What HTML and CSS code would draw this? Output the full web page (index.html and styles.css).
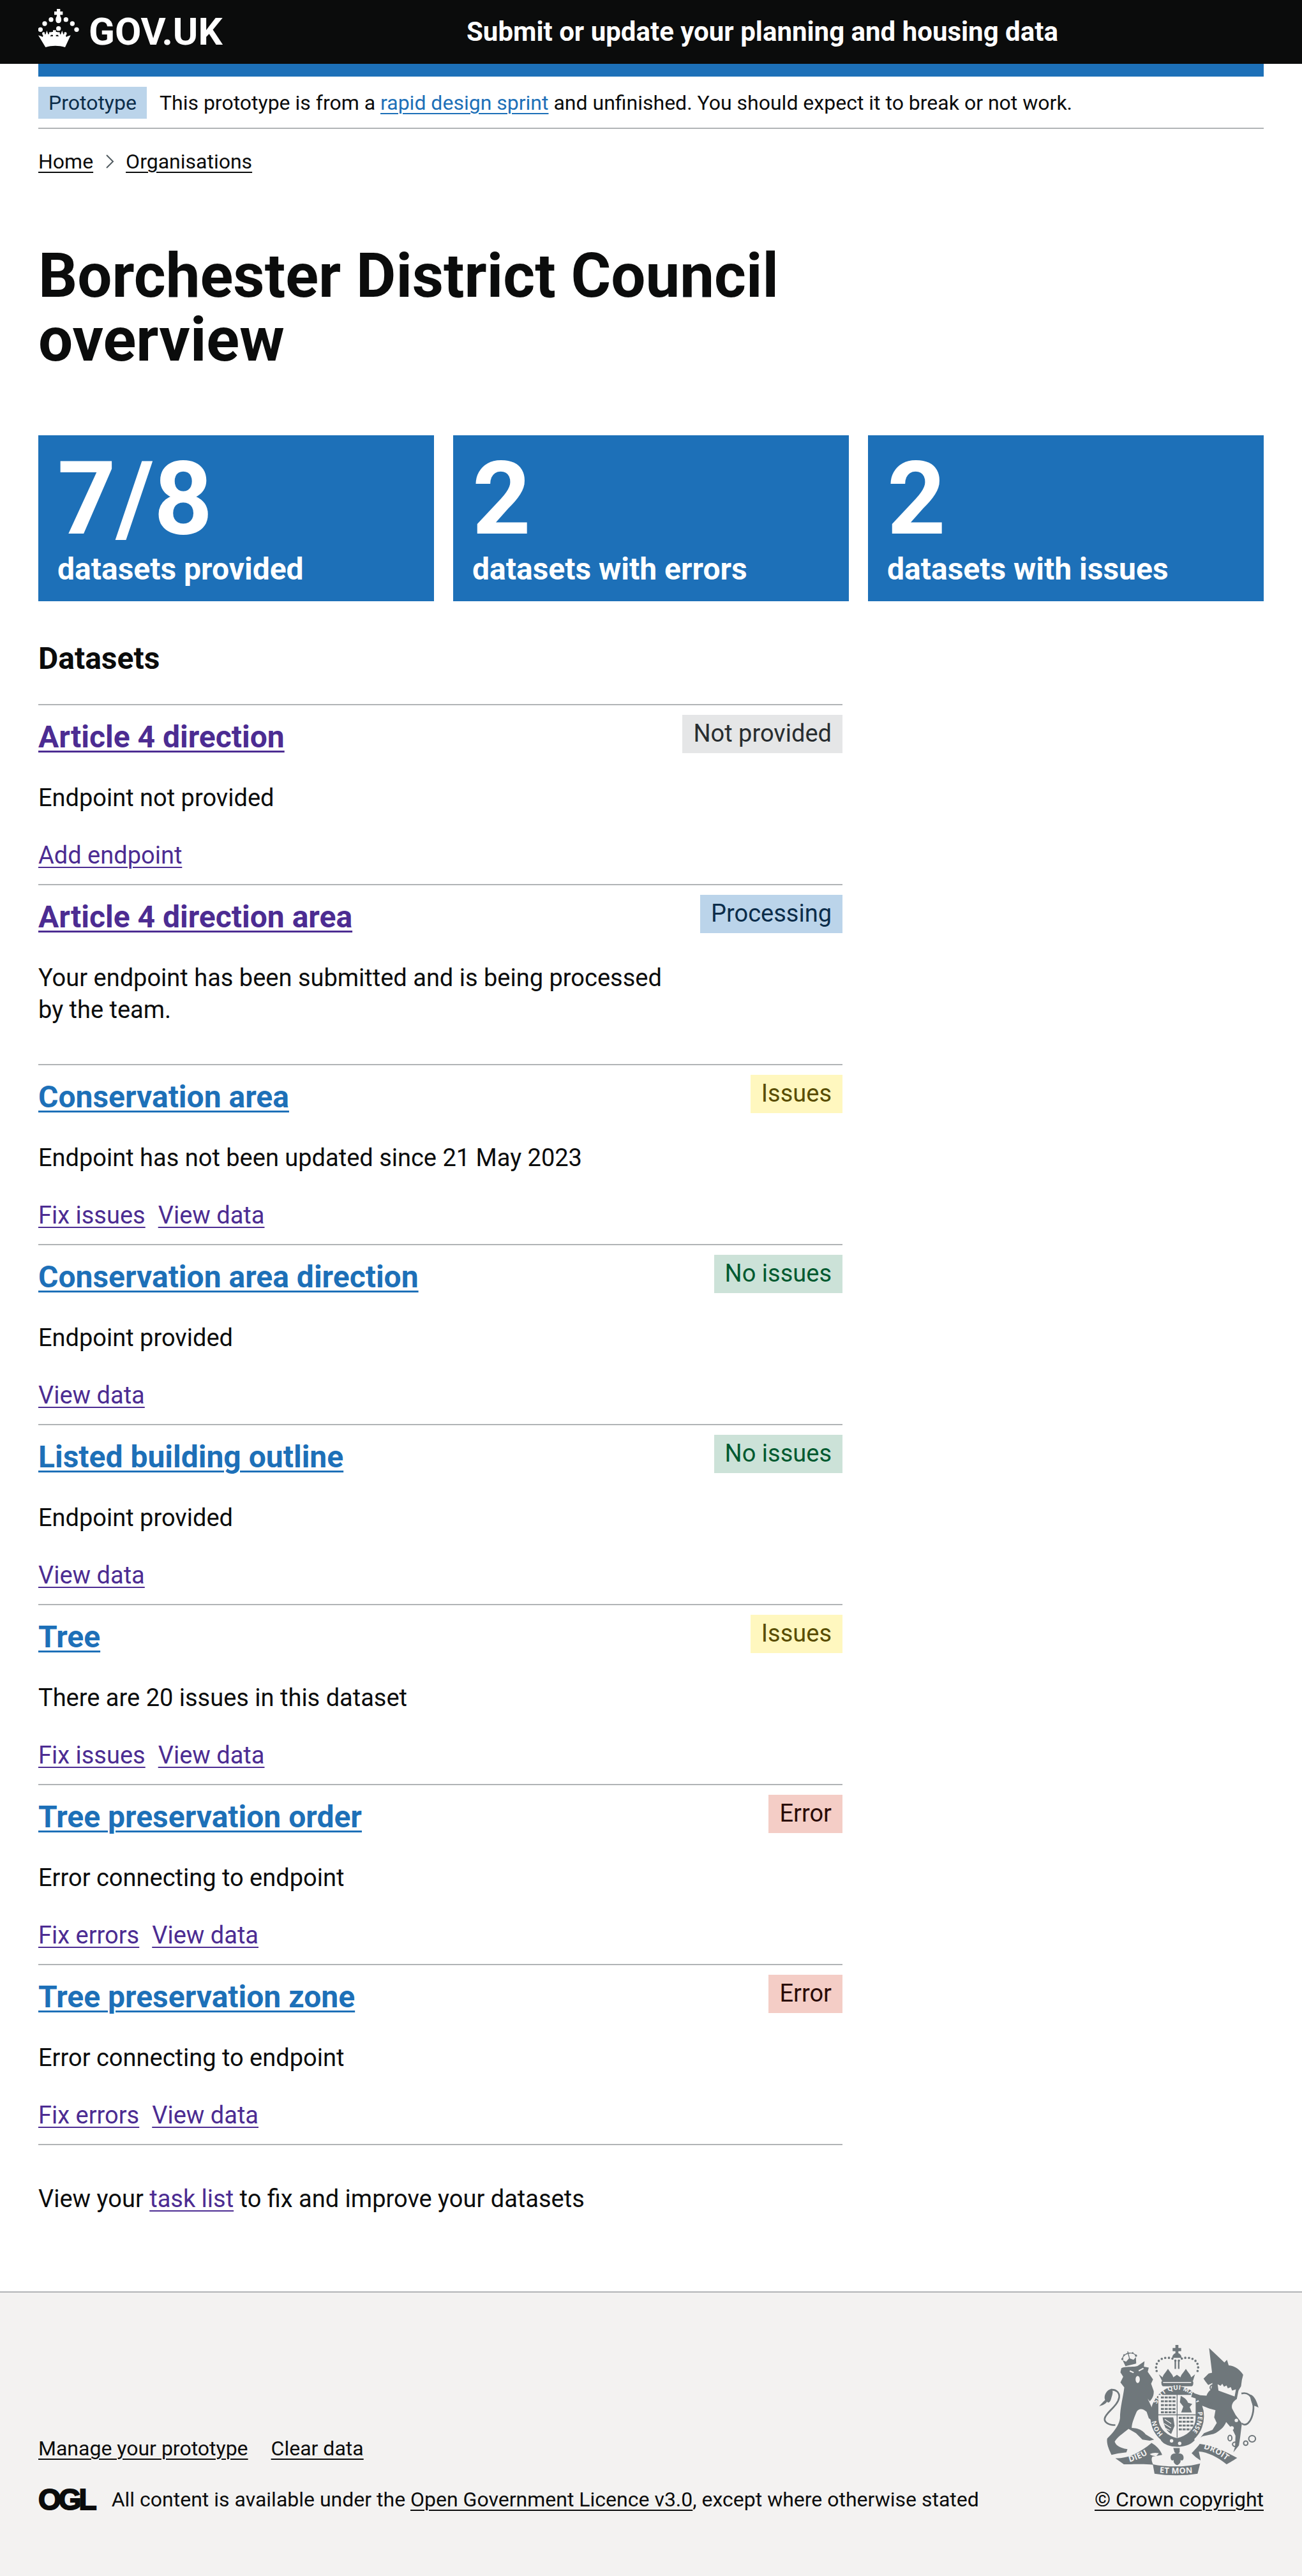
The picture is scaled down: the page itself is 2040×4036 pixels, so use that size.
FILE: index.html
```html
<!DOCTYPE html>
<html lang="en">
<head>
    <meta charset="UTF-8">
    <meta name="viewport" content="width=device-width, initial-scale=1.0">
    <title>Borchester District Council overview</title>
    <link rel="stylesheet" href="styles.css">
</head>
<body>
    <header class="site-header">
        <a class="logo" href="#">
            <svg class="logo-crown" viewBox="30 28 192 180" aria-hidden="true">
                <path d="M117 28h16v12h12v16h-12v6c8 10 8 33-8 33s-16-23-8-33v-6h-12V40h12z"/>
                <circle cx="90" cy="78" r="11"/><circle cx="160" cy="78" r="11"/>
                <circle cx="60" cy="97" r="11"/><circle cx="190" cy="97" r="11"/>
                <circle cx="40" cy="125" r="11"/><circle cx="210" cy="125" r="11"/>
                <circle cx="125" cy="120" r="11"/>
                <path d="M30 152l14 4 6 4 3-6-4-7c-3-8 4-13 12-8-2 4-1 7 3 9l6-18 7 18c4-2 5-5 3-9 8-5 15 0 11 9l-5 9 13-1v-6h-8v-14h8v-8h14v8h8v14h-8v6l13 1-5-9c-4-9 3-14 11-9-2 4-1 7 3 9l7-18 6 18c4-2 5-5 3-9 8-5 15 0 12 8l-4 7 3 6 6-4 14-4-26 56c-30-9-62-9-92 0z"/>
            </svg>
            <span class="logo-text">GOV.UK</span>
        </a>
        <a class="service-name" href="#">Submit or update your planning and housing data</a>
    </header>

    <div class="page">
        <div class="blue-bar"></div>

        <div class="phase-banner">
            <strong class="tag tag-blue">Prototype</strong>
            <span>This prototype is from a <a class="link-blue" href="#">rapid design sprint</a> and unfinished. You should expect it to break or not work.</span>
        </div>

        <nav class="breadcrumbs">
            <a href="#">Home</a>
            <svg class="crumb-arrow" viewBox="0 0 14 22" aria-hidden="true"><path d="M2 1l10 10L2 21"/></svg>
            <a href="#">Organisations</a>
        </nav>

        <main>
            <h1>Borchester District Council overview</h1>

            <div class="stats">
                <div class="stat"><div class="stat-number">7/8</div><div class="stat-label">datasets provided</div></div>
                <div class="stat"><div class="stat-number">2</div><div class="stat-label">datasets with errors</div></div>
                <div class="stat"><div class="stat-number">2</div><div class="stat-label">datasets with issues</div></div>
            </div>

            <h2 class="section-title">Datasets</h2>

            <ul class="dataset-list">
                <li class="dataset">
                    <div class="dataset-head">
                        <a class="dataset-title visited" href="#">Article 4 direction</a>
                        <strong class="tag tag-grey">Not provided</strong>
                    </div>
                    <p>Endpoint not provided</p>
                    <div class="dataset-links"><a href="#">Add endpoint</a></div>
                </li>
                <li class="dataset">
                    <div class="dataset-head">
                        <a class="dataset-title visited" href="#">Article 4 direction area</a>
                        <strong class="tag tag-blue">Processing</strong>
                    </div>
                    <p class="narrow">Your endpoint has been submitted and is being processed by the team.</p>
                </li>
                <li class="dataset">
                    <div class="dataset-head">
                        <a class="dataset-title" href="#">Conservation area</a>
                        <strong class="tag tag-yellow">Issues</strong>
                    </div>
                    <p>Endpoint has not been updated since 21 May 2023</p>
                    <div class="dataset-links"><a href="#">Fix issues</a><a href="#">View data</a></div>
                </li>
                <li class="dataset">
                    <div class="dataset-head">
                        <a class="dataset-title" href="#">Conservation area direction</a>
                        <strong class="tag tag-green">No issues</strong>
                    </div>
                    <p>Endpoint provided</p>
                    <div class="dataset-links"><a href="#">View data</a></div>
                </li>
                <li class="dataset">
                    <div class="dataset-head">
                        <a class="dataset-title" href="#">Listed building outline</a>
                        <strong class="tag tag-green">No issues</strong>
                    </div>
                    <p>Endpoint provided</p>
                    <div class="dataset-links"><a href="#">View data</a></div>
                </li>
                <li class="dataset">
                    <div class="dataset-head">
                        <a class="dataset-title" href="#">Tree</a>
                        <strong class="tag tag-yellow">Issues</strong>
                    </div>
                    <p>There are 20 issues in this dataset</p>
                    <div class="dataset-links"><a href="#">Fix issues</a><a href="#">View data</a></div>
                </li>
                <li class="dataset">
                    <div class="dataset-head">
                        <a class="dataset-title" href="#">Tree preservation order</a>
                        <strong class="tag tag-red">Error</strong>
                    </div>
                    <p>Error connecting to endpoint</p>
                    <div class="dataset-links"><a href="#">Fix errors</a><a href="#">View data</a></div>
                </li>
                <li class="dataset">
                    <div class="dataset-head">
                        <a class="dataset-title" href="#">Tree preservation zone</a>
                        <strong class="tag tag-red">Error</strong>
                    </div>
                    <p>Error connecting to endpoint</p>
                    <div class="dataset-links"><a href="#">Fix errors</a><a href="#">View data</a></div>
                </li>
            </ul>

            <p class="task-note">View your <a href="#">task list</a> to fix and improve your datasets</p>
        </main>
    </div>

    <footer class="site-footer">
        <div class="footer-left">
            <div class="footer-links"><a href="#">Manage your prototype</a><a href="#">Clear data</a></div>
            <div class="footer-meta">
                <span class="ogl">OGL</span>
                <span>All content is available under the <a href="#">Open Government Licence v3.0</a>, except where otherwise stated</span>
            </div>
        </div>
        <div class="footer-right">
            <svg class="crest" viewBox="190 150 755 620" aria-hidden="true">
                <!-- lion -->
                <path class="crest-fill" d="M296 265c24-10 54-3 76-10l33-23-3 26 23 4-5 20 25 36-9 20 12 34c2 23-8 38-18 48l-10-12 45 97-20 10-20-15-10-30c-20-20-40-15-47 0-13 30-23 55-23 75 25 0 50 10 65 30l40 25-20 5-35-5-30-30-35-20c-25 20-55 40-65 60 5 15 20 30 60 35l-5 15-40 5-30 7c-10-22-25-52-20-77 20-20 55-55 60-95 0-50 15-100 20-145l-18-23 13-27-13-20z"/>
                <path class="crest-line" d="M268 532c-30 0-52-12-50-30 3-28 62-58 68-100 3-22-14-38-38-36"/>
                <path class="crest-fill" d="M250 362c-25 5-38 35-30 52-10 10-22 22-28 30 12-4 28-8 38-22 5 10 14 2 18-12 4-16 14-36 2-48z"/>
                <path class="crest-gap" d="M336 278l18 8M400 266l-22 12"/>
                <ellipse class="crest-cut" cx="373" cy="318" rx="10" ry="17"/>
                <g transform="rotate(-14 335 222)">
                    <path class="crest-fill" d="M302 220l14 10 18-12 18 12 14-10-6 30h-52z"/>
                    <path class="crest-line thin" d="M302 215c4-18 24-20 33-22 9 2 29 4 33 22"/>
                    <path class="crest-line thin" d="M335 185v35M326 195h18"/>
                    <circle class="crest-fill" cx="302" cy="214" r="5"/><circle class="crest-fill" cx="368" cy="214" r="5"/>
                    <circle class="crest-fill" cx="314" cy="198" r="4"/><circle class="crest-fill" cx="356" cy="198" r="4"/>
                </g>

                <!-- royal crown -->
                <path class="crest-fill" d="M550 156h14v14h13v15h-13v10c12 4 16 16 14 22h-42c-2-6 2-18 14-22v-10h-13v-15h13z"/>
                <path class="crest-dots" d="M462 278c-10-30 8-62 50-62 20 0 32 6 38 14M654 278c10-30-8-62-50-62-20 0-32 6-38 14"/>
                <path class="crest-fill" d="M546 230h7v38h-7zM562 230h7v38h-7z"/>
                <path class="crest-fill" d="M472 294l18 14c3-14 12-20 25-40 13 20 22 26 25 40l17-12 17 12c3-14 12-20 25-40 13 20 22 26 25 40l18-14-10 32H488z"/>
                <path class="crest-fill" d="M484 332c0-6 4-8 10-8h128c6 0 12 2 12 8 0 14-4 18-10 18H494c-6 0-10-6-10-18z"/>
                <path class="crest-gap thin" d="M492 332h132"/>

                <!-- garter and shield -->
                <ellipse class="crest-fill" cx="558" cy="490" rx="126" ry="140"/>
                <defs>
                    <path id="garter-top" d="M454 480a104 114 0 0 1 208 0"/>
                    <path id="garter-right" d="M655 470a100 112 0 0 1-34 100"/>
                    <path id="garter-left" d="M492 574a100 112 0 0 1-34-70"/>
                    <path id="ribbon-left" d="M322 708c40-8 75-24 110-46"/>
                    <path id="ribbon-mid" d="M466 755c50 6 125 6 175 0"/>
                    <path id="ribbon-right" d="M670 640c42 8 90 32 128 66"/>
                </defs>
                <text class="crest-text"><textPath href="#garter-top" startOffset="50%" text-anchor="middle">SOIT QUI MAL Y</textPath></text>
                <text class="crest-text"><textPath href="#garter-right">PENSE</textPath></text>
                <text class="crest-text"><textPath href="#garter-left">HON</textPath></text>
                <path class="crest-cut" d="M470 390h175v105c0 55-42 88-87 98-45-10-88-43-88-98z"/>
                <path class="crest-line thin" d="M558 386v206M468 484h178"/>
                <path class="crest-stripes" d="M482 402h68M482 420h68M482 438h68M482 456h68M482 472h68M566 498h68M566 516h68M566 534h68M566 552h56"/>
                <path class="crest-fill" d="M575 395c20 10 30 20 34 32l20 6-12 14 10 26h-50l10-28-16-20z"/>
                <path class="crest-fill" d="M490 496h50l6 40-16 38c-20-12-34-34-40-78z"/>
                <path class="crest-gap thin" d="M500 505l30 20M497 525l32 20M505 548l18 10"/>
                <path class="crest-fill" d="M484 582c30 28 108 36 152 0l4 22c-20 22-50 30-82 30s-62-10-76-30z"/>
                <circle class="crest-cut" cx="532" cy="606" r="8"/><circle class="crest-cut" cx="570" cy="618" r="8"/>

                <!-- motto -->
                <path class="crest-fill" d="M268 688c60 0 110-22 170-72 22 12 42 34 50 56l-46 8c-6 10-4 22 4 38-60-6-105 0-138 -2z"/>
                <path class="crest-cut" d="M430 668c12-6 26-8 42-4l-12 14c-14-2-24-4-30-10z"/>
                <path class="crest-fill" d="M444 716c60 14 160 14 222-4l-12 48c-60 10-140 10-202 0z"/>
                <path class="crest-fill" d="M626 664c10-12 24-24 38-44 60 6 130 40 176 66-12 8-36 22-50 30-40-34-90-58-130-60 4 20 8 34 8 42-14-8-30-20-42-34z"/>
                <text class="crest-text ribbon"><textPath href="#ribbon-left" startOffset="50%" text-anchor="middle">DIEU</textPath></text>
                <text class="crest-text ribbon"><textPath href="#ribbon-mid" startOffset="50%" text-anchor="middle">ET MON</textPath></text>
                <text class="crest-text ribbon"><textPath href="#ribbon-right" startOffset="50%" text-anchor="middle">DROIT</textPath></text>
                <path class="crest-fill" d="M540 640h30v20l-6 6c10-4 28 4 24 24-2 8-8 10-14 6 2 8-2 20-16 24-14-4-18-16-16-24-6 4-12 2-14-6-4-20 14-28 24-24l-6-6z"/>

                <!-- unicorn -->
                <path class="crest-fill" d="M708 170l72 68 12-12 8 26c30 2 54 22 68 44l-6 24-4 30-12 20-8 40c-20 12-26 30-22 44l16 30 30 40-8 64-6 40-26 32 8-28 2-50-14-30-30-34c-8 22-30 44-60 56l-50 10-10 6 16-20 40-16 20-32-12-26 6-34-30-8-36-14-18-30-30-10 6-20 36 12 30 2c4-14 14-24 22-30l6-30-20 10-14-18-8-12 24-24 16-4z"/>
                <path class="crest-line" d="M860 384c28-8 48 10 54 40 8 42-6 84-24 100-14 10-24 4-28 0"/>
                <path class="crest-fill" d="M900 388c22 4 34 40 40 62-8-6-20-8-28-12-6-16-12-34-12-50z"/>
                <path class="crest-cut" d="M748 340l14 8 8-10 8 14 12-6 6 14 14-6 6 16 18-6-6 34-76-28z"/>
                <circle class="crest-cut" cx="846" cy="465" r="9"/><circle class="crest-cut" cx="836" cy="510" r="8"/><circle class="crest-cut" cx="815" cy="546" r="9"/>
                <g class="crest-ring">
                    <ellipse cx="723" cy="356" rx="10" ry="11"/><ellipse cx="712" cy="439" rx="12" ry="11"/>
                    <ellipse cx="806" cy="593" rx="9" ry="13"/><ellipse cx="830" cy="622" rx="12" ry="10"/>
                    <ellipse cx="880" cy="617" rx="10" ry="10"/><ellipse cx="910" cy="596" rx="16" ry="15"/>
                </g>
            </svg>
            <a href="#">© Crown copyright</a>
        </div>
    </footer>
</body>
</html>
```

FILE: styles.css
```css
* {
    box-sizing: border-box;
}

body {
    margin: 0;
    font-family: Roboto, "Liberation Sans", sans-serif;
    font-size: 38px;
    line-height: 50px;
    color: #0b0c0c;
    background: #fff;
}

a {
    color: inherit;
    text-decoration: underline;
    text-decoration-thickness: 2px;
    text-underline-offset: 5px;
}

/* header */
.site-header {
    display: flex;
    align-items: center;
    height: 100px;
    padding: 0 60px;
    background: #0b0c0c;
    color: #fff;
}

.site-header a {
    text-decoration: none;
}

.logo {
    display: flex;
    align-items: center;
    flex: 0 0 671px;
}

.logo-crown {
    width: 64px;
    height: 60px;
    margin-right: 15px;
    margin-top: -12px;
    fill: #fff;
}

.logo-text {
    font-size: 60px;
    font-weight: 700;
    line-height: 60px;
}

.service-name {
    font-size: 42px;
    font-weight: 700;
}

/* page */
.page {
    margin: 0 60px;
}

.blue-bar {
    height: 20px;
    background: #1d70b8;
}

.phase-banner {
    display: flex;
    align-items: center;
    gap: 20px;
    height: 82px;
    padding-top: 2px;
    font-size: 32px;
    border-bottom: 2px solid #b1b4b6;
}

.tag {
    display: block;
    font-weight: 400;
    white-space: nowrap;
}

.phase-banner .tag {
    height: 50px;
    padding: 0 16px;
    line-height: 50px;
}

.link-blue {
    color: #1d70b8;
}

.breadcrumbs {
    display: flex;
    align-items: center;
    margin-top: 31px;
    height: 40px;
    font-size: 32px;
    line-height: 40px;
}

.crumb-arrow {
    width: 14px;
    height: 22px;
    margin: 0 18px 0 19px;
    fill: none;
    stroke: #505a5f;
    stroke-width: 2;
}

h1 {
    width: 1280px;
    margin: 109px 0 100px;
    font-size: 96px;
    line-height: 100px;
    font-weight: 700;
}

.stats {
    display: grid;
    grid-template-columns: repeat(3, 1fr);
    gap: 30px;
}

.stat {
    height: 260px;
    padding: 20px 30px;
    background: #1d70b8;
    color: #fff;
}

.stat-number {
    font-size: 160px;
    line-height: 160px;
    font-weight: 700;
}

.stat-label {
    font-size: 48px;
    line-height: 60px;
    font-weight: 700;
}

.section-title {
    margin: 60px 0 41px;
    font-size: 48px;
    line-height: 60px;
    font-weight: 700;
}

/* dataset rows */
.dataset-list {
    width: 1260px;
    margin: 0;
    padding: 0;
    list-style: none;
    border-bottom: 2px solid #b1b4b6;
}

.dataset {
    padding: 15px 0 20px;
    border-top: 2px solid #b1b4b6;
}

.dataset-head {
    display: flex;
    justify-content: space-between;
    align-items: flex-start;
    margin-bottom: 40px;
}

.dataset-title {
    margin-top: 5px;
    font-size: 48px;
    line-height: 60px;
    font-weight: 700;
    color: #1d70b8;
    text-decoration-thickness: 3px;
}

.dataset-title.visited {
    color: #4c2c92;
}

.dataset .tag {
    height: 60px;
    padding: 0 17px;
    line-height: 58px;
}

.dataset p {
    margin: 0 0 40px;
}

.dataset p.narrow {
    width: 1000px;
}

.dataset-links {
    display: flex;
    gap: 20px;
}

.dataset-links a,
.task-note a {
    color: #4c2c92;
}

.tag-grey { background: #e5e6e7; color: #282d30; }
.tag-blue { background: #bbd4ea; color: #0c2d4a; }
.tag-yellow { background: #fff7bf; color: #594d00; }
.tag-green { background: #cce2d8; color: #005a30; }
.tag-red { background: #f4cdc6; color: #2a0b06; }

.task-note {
    margin: 59px 0 120px;
}

/* footer */
.site-footer {
    display: flex;
    justify-content: space-between;
    align-items: flex-end;
    height: 446px;
    padding: 80px 60px 100px;
    background: #f3f2f1;
    border-top: 2px solid #b1b4b6;
    font-size: 32px;
    line-height: 40px;
}

.footer-links {
    display: flex;
    gap: 36px;
    margin-bottom: 40px;
}

.footer-meta {
    display: flex;
    align-items: center;
}

.ogl {
    margin-right: 27px;
    font-family: "Liberation Sans", sans-serif;
    font-size: 46px;
    font-weight: 700;
    letter-spacing: -4px;
    -webkit-text-stroke: 2px #0b0c0c;
}

.footer-right {
    display: flex;
    flex-direction: column;
    align-items: center;
}

.crest {
    width: 253px;
    height: 207px;
    margin-bottom: 17px;
}

.crest-fill { fill: #6f777b; }
.crest-cut { fill: #f3f2f1; }
.crest-line { fill: none; stroke: #6f777b; stroke-width: 8; }
.crest-line.thin { stroke-width: 4; }
.crest-gap { fill: none; stroke: #f3f2f1; stroke-width: 6; }
.crest-gap.thin { stroke-width: 4; }
.crest-dots { fill: none; stroke: #6f777b; stroke-width: 11; stroke-linecap: round; stroke-dasharray: 0 17; }
.crest-stripes { fill: none; stroke: #6f777b; stroke-width: 9; stroke-dasharray: 14 4; }
.crest-ring { fill: none; stroke: #6f777b; stroke-width: 6; }
.crest-text { fill: #f3f2f1; font-family: "Open Sans", sans-serif; font-size: 30px; font-weight: 700; letter-spacing: 1px; }
.crest-text.ribbon { font-size: 38px; }
```
